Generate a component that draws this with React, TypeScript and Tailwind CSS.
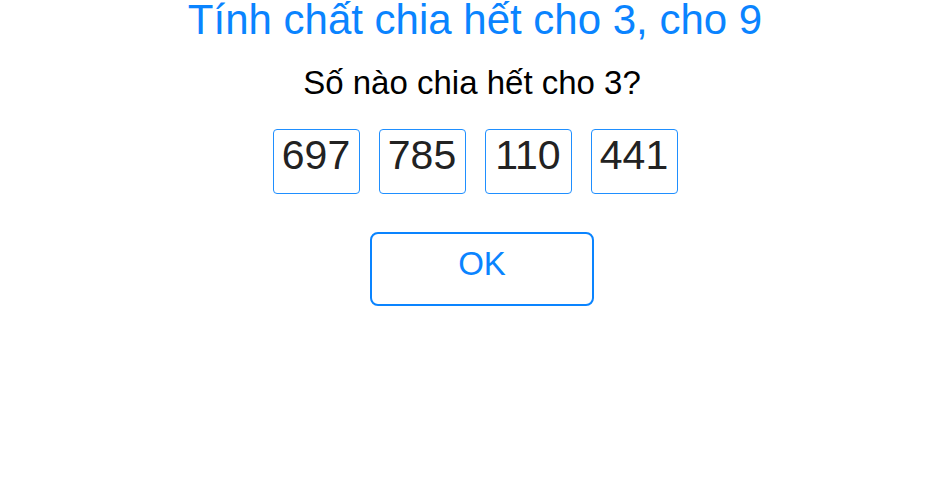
import React from "react";

const numbers = [697, 785, 110, 441];

const App: React.FC = () => {
  return (
    <div className="w-[940px] h-[490px] bg-white font-['Liberation_Sans',Arial,sans-serif] flex flex-col items-center pl-[10px]">
      <h1 className="text-[42px] leading-[40px] text-[#0a84ff]">
        Tính chất chia hết cho 3, cho 9
      </h1>
      <p className="text-[33px] leading-[38px] text-black mt-[24px] mr-[6px]">Số nào chia hết cho 3?</p>

      <div className="flex gap-[19px] mt-[27px]">
        {numbers.map((n) => (
          <div
            key={n}
            className="w-[87px] h-[65px] border border-[#1f8fff] rounded-[4px] flex items-center justify-center pb-[11px] text-[41px] text-[#222222]"
          >
            {n}
          </div>
        ))}
      </div>

      <button className="mt-[38px] ml-[14px] w-[224px] h-[74px] border-2 border-[#0a84ff] rounded-[8px] pb-[10px] text-[33px] text-[#0a84ff] bg-white">
        OK
      </button>
    </div>
  );
};

export default App;
